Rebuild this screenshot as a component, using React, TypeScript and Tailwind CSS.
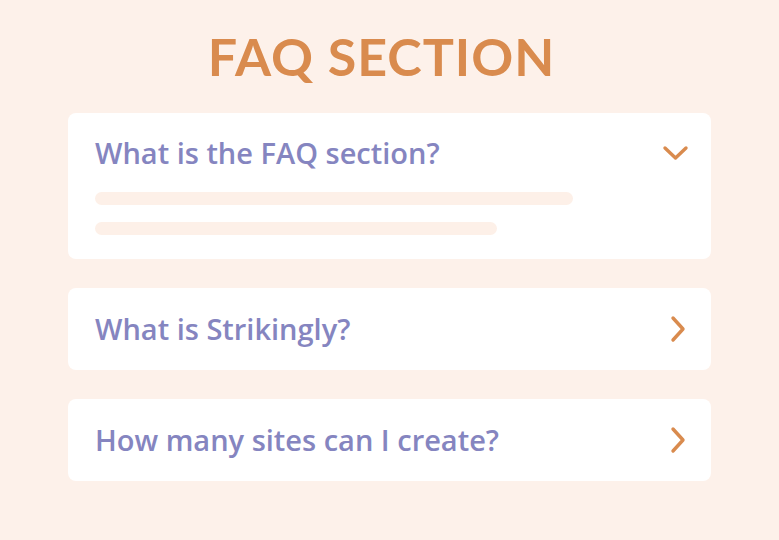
const items = [
  { q: "What is the FAQ section?", open: true },
  { q: "What is Strikingly?", open: false },
  { q: "How many sites can I create?", open: false },
];

function ChevronDown() {
  return (
    <svg width="27" height="18" viewBox="0 0 27 18" fill="none">
      <path d="M3 4l10.5 10L24 4" stroke="#d98b4e" strokeWidth="3.4" strokeLinecap="round" strokeLinejoin="round" />
    </svg>
  );
}

function ChevronRight() {
  return (
    <svg width="18" height="28" viewBox="0 0 18 28" fill="none">
      <path d="M4 3l10 11L4 25" stroke="#d98b4e" strokeWidth="3.4" strokeLinecap="round" strokeLinejoin="round" />
    </svg>
  );
}

export default function App() {
  return (
    <div className="w-[779px] h-[540px] bg-[#fdf1ea] flex flex-col items-center overflow-hidden">
      <h1 className="mt-[26px] mr-[16px] text-[52px] leading-[60px] font-bold tracking-[1px] text-[#d98b4e] font-['Lato',sans-serif]">
        FAQ SECTION
      </h1>

      <div className="mt-[27px] w-[643px] flex flex-col gap-[29px] font-['Open_Sans',sans-serif]">
        {items.map((item) =>
          item.open ? (
            <div key={item.q} className="bg-white rounded-[8px] pl-[27px] pr-[22px] pt-[20px] pb-[24px]">
              <div className="flex items-center justify-between">
                <span className="text-[29px] leading-[40px] font-semibold text-[#8585c0]">{item.q}</span>
                <ChevronDown />
              </div>
              <div className="mt-[19px] w-[478px] h-[13px] rounded-full bg-[#fdf0e8]" />
              <div className="mt-[17px] w-[402px] h-[13px] rounded-full bg-[#fdf0e8]" />
            </div>
          ) : (
            <div key={item.q} className="bg-white rounded-[8px] h-[82px] pl-[27px] pr-[24px] flex items-center justify-between">
              <span className="text-[29px] leading-[40px] font-semibold text-[#8585c0]">{item.q}</span>
              <ChevronRight />
            </div>
          )
        )}
      </div>
    </div>
  );
}
